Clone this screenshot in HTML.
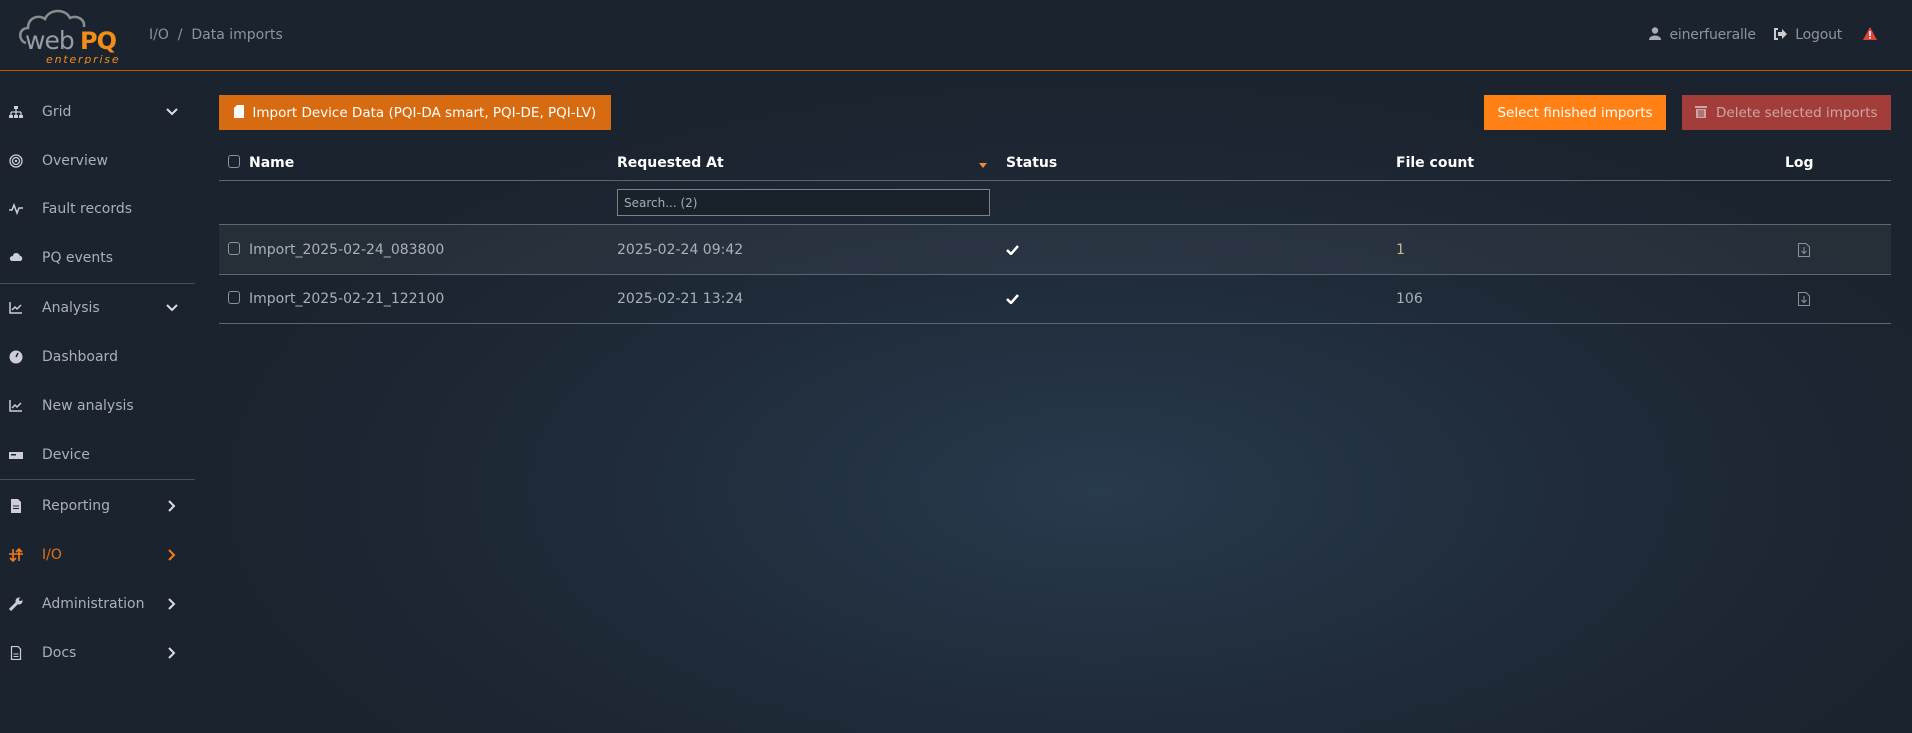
<!DOCTYPE html>
<html><head><meta charset="utf-8"><style>
*{box-sizing:border-box;margin:0;padding:0}
body{width:1912px;height:733px;overflow:hidden;font-family:"DejaVu Sans","Liberation Sans",sans-serif;font-size:13px;color:#b4bac2;
background:radial-gradient(ellipse 900px 420px at 1100px 490px,#283a4d 0%,#1f2b39 55%,#1b232e 100%);position:relative}
.hdr{position:absolute;left:0;top:0;width:1912px;height:71px;background:#1b232e;border-bottom:1px solid #b85a10}
.side{position:absolute;left:0;top:71px;width:195px;height:662px;background:#1b232e}
.it{position:absolute;left:0;width:195px;height:30px;line-height:30px;font-size:14px;color:#a9b0b8}
.it .ic{position:absolute;left:9px;top:8px;width:14px;height:14px}
.it .tx{position:absolute;left:42px}
.it .ch{position:absolute;left:166px;top:8px}
.sep{position:absolute;left:0;width:195px;height:1px;background:#4a4f55}
.btn{position:absolute;height:35px;line-height:36px;color:#fff;font-size:13.5px;text-align:center}
.th{position:absolute;top:155px;font-weight:bold;color:#fff;font-size:14px}
.hl{position:absolute;left:219px;width:1672px;height:1px;background:#5d6774}
.cb{position:absolute;width:12px;height:13px;border:1px solid #8a929c;border-radius:3px}
.td{position:absolute;font-size:14px;color:#a9b0b8}
</style></head><body>
<div class="hdr">
<svg style="position:absolute;left:16px;top:6px" width="110" height="58" viewBox="0 0 110 58">
<path d="M10 37 C2 35 2 22 12 22 C12 12 22 8 29 13 C33 3 49 2 54 12 C61 9 69 13 68 21" fill="none" stroke="#8a8d90" stroke-width="2.5"/>
<text x="9" y="43" font-family="DejaVu Sans" font-size="25" fill="#9a9d9f" letter-spacing="-1">web</text>
<text x="64" y="43" font-family="DejaVu Sans" font-size="24" font-weight="bold" fill="#f28c1a" letter-spacing="-1">PQ</text>
<text x="30" y="57" font-family="DejaVu Sans" font-size="11" font-style="italic" fill="#f28c1a" letter-spacing="1.8">enterprise</text>
</svg>
<div style="position:absolute;left:149px;top:27px;font-size:14px;color:#8c939b">I/O &nbsp;/&nbsp; Data imports</div>
<div style="position:absolute;left:1649px;top:27px;font-size:14px;color:#8c939b;letter-spacing:-0.2px">
<svg width="12" height="13" viewBox="0 0 12 13" style="vertical-align:-1px"><circle cx="6" cy="3.5" r="3.2" fill="#aab"/><path d="M0 13 C0 7 12 7 12 13Z" fill="#aab"/></svg>
&nbsp;einerfueralle&nbsp;&nbsp;&nbsp;
<svg width="14" height="12" viewBox="0 0 14 12" style="vertical-align:-1px"><path d="M5 1H2V11H5" fill="none" stroke="#ccc" stroke-width="2"/><path d="M5 4H9V1L14 6L9 11V8H5Z" fill="#ccc"/></svg>
&nbsp;Logout&nbsp;&nbsp;&nbsp;&nbsp;
<svg width="14" height="13" viewBox="0 0 14 13" style="vertical-align:-1px"><path d="M7 0L14 13H0Z" fill="#e0433a"/><rect x="6.2" y="4" width="1.6" height="5" fill="#fff"/><rect x="6.2" y="10" width="1.6" height="1.6" fill="#fff"/></svg>
</div>
</div>
<div class="side">
<div class="it" style="top:26px"><svg class="ic" viewBox="0 0 14 14"><rect x="5" y="1" width="4" height="3" fill="#ccd"/><path d="M7 4V7M2 7H12M2 7V10M7 7V10M12 7V10" stroke="#ccd" stroke-width="1.3" fill="none"/><rect x="0" y="10" width="4" height="3" fill="#ccd"/><rect x="5" y="10" width="4" height="3" fill="#ccd"/><rect x="10" y="10" width="4" height="3" fill="#ccd"/></svg><span class="tx">Grid</span><svg class="ch" width="12" height="14" viewBox="0 0 12 14"><path d="M1 4L6 9L11 4" stroke="#ddd" stroke-width="2" fill="none"/></svg></div>
<div class="it" style="top:75px"><svg class="ic" viewBox="0 0 14 14"><circle cx="7" cy="7" r="6" fill="none" stroke="#ccd" stroke-width="1.3"/><circle cx="7" cy="7" r="3.5" fill="none" stroke="#ccd" stroke-width="1.3"/><circle cx="7" cy="7" r="1.2" fill="#ccd"/></svg><span class="tx">Overview</span></div>
<div class="it" style="top:123px"><svg class="ic" viewBox="0 0 14 14"><path d="M0 8H3L5 3L8 11L10 6H14" stroke="#ccd" stroke-width="1.5" fill="none"/></svg><span class="tx">Fault records</span></div>
<div class="it" style="top:172px"><svg class="ic" viewBox="0 0 14 14"><path d="M3 10C0 10 0 5 4 5C4 1 10 1 11 5C14 5 14 10 11 10Z" fill="#ccd"/></svg><span class="tx">PQ events</span></div>
<div class="sep" style="top:212px"></div>
<div class="it" style="top:222px"><svg class="ic" viewBox="0 0 14 14"><path d="M1 1V12H13" stroke="#ccd" stroke-width="1.5" fill="none"/><path d="M3 9L6 6L8 8L12 4" stroke="#ccd" stroke-width="1.5" fill="none"/></svg><span class="tx">Analysis</span><svg class="ch" width="12" height="14" viewBox="0 0 12 14"><path d="M1 4L6 9L11 4" stroke="#ddd" stroke-width="2" fill="none"/></svg></div>
<div class="it" style="top:271px"><svg class="ic" viewBox="0 0 14 14"><circle cx="7" cy="7" r="6.5" fill="#ccd"/><path d="M7 7L9 3" stroke="#1b232e" stroke-width="1.5"/></svg><span class="tx">Dashboard</span></div>
<div class="it" style="top:320px"><svg class="ic" viewBox="0 0 14 14"><path d="M1 1V12H13" stroke="#ccd" stroke-width="1.5" fill="none"/><path d="M3 9L6 6L8 8L12 4" stroke="#ccd" stroke-width="1.5" fill="none"/></svg><span class="tx">New analysis</span></div>
<div class="it" style="top:369px"><svg class="ic" viewBox="0 0 14 14"><rect x="0" y="4" width="14" height="7" fill="#ccd"/><rect x="2" y="6" width="5" height="1.5" fill="#1b232e"/></svg><span class="tx">Device</span></div>
<div class="sep" style="top:408px"></div>
<div class="it" style="top:420px"><svg class="ic" viewBox="0 0 14 14"><path d="M2 0H9L12 3V14H2Z" fill="#ccd"/><path d="M4 7H10M4 9.5H10" stroke="#1b232e"/></svg><span class="tx">Reporting</span><svg class="ch" width="12" height="14" viewBox="0 0 12 14"><path d="M3 2L8 7L3 12" stroke="#ddd" stroke-width="2" fill="none"/></svg></div>
<div class="it" style="top:469px;color:#e0731a"><svg class="ic" viewBox="0 0 14 14"><path d="M4 1V13M1 10L4 13L7 10M10 13V1M7 4L10 1L13 4M0 6H14" stroke="#f07d1a" stroke-width="1.6" fill="none"/></svg><span class="tx">I/O</span><svg class="ch" width="12" height="14" viewBox="0 0 12 14"><path d="M3 2L8 7L3 12" stroke="#f07d1a" stroke-width="2" fill="none"/></svg></div>
<div class="it" style="top:518px"><svg class="ic" viewBox="0 0 14 14"><path d="M1 13L8 6" stroke="#ccd" stroke-width="3"/><circle cx="10" cy="4" r="3.5" fill="#ccd"/><circle cx="11.5" cy="2.5" r="1.5" fill="#1b232e"/></svg><span class="tx">Administration</span><svg class="ch" width="12" height="14" viewBox="0 0 12 14"><path d="M3 2L8 7L3 12" stroke="#ddd" stroke-width="2" fill="none"/></svg></div>
<div class="it" style="top:567px"><svg class="ic" viewBox="0 0 14 14"><path d="M2.5 .5H9L11.5 3V13.5H2.5Z" fill="none" stroke="#ccd" stroke-width="1.2"/><path d="M4.5 8H9.5M4.5 10.5H9.5" stroke="#ccd"/></svg><span class="tx">Docs</span><svg class="ch" width="12" height="14" viewBox="0 0 12 14"><path d="M3 2L8 7L3 12" stroke="#ddd" stroke-width="2" fill="none"/></svg></div>
</div>

<div class="btn" style="left:219px;top:95px;width:392px;background:#d66b12"><svg width="10" height="13" viewBox="0 0 10 13" style="vertical-align:-1px"><path d="M3 0H10V13H0V3Z" fill="#fff"/></svg>&nbsp; Import Device Data (PQI-DA smart, PQI-DE, PQI-LV)</div>
<div class="btn" style="left:1484px;top:95px;width:182px;background:#ff8015">Select finished imports</div>
<div class="btn" style="left:1682px;top:95px;width:209px;background:#a33d3a;color:#c9a8a6"><svg width="12" height="13" viewBox="0 0 12 13" style="vertical-align:-1px"><rect x="0" y="1" width="12" height="2" fill="#c9a8a6"/><path d="M1 4H11V13H1Z" fill="#c9a8a6"/><path d="M4 5V12M6 5V12M8 5V12" stroke="#a33d3a"/></svg>&nbsp; Delete selected imports</div>

<div class="cb" style="left:228px;top:155px"></div>
<div class="th" style="left:249px">Name</div>
<div class="th" style="left:617px">Requested At</div>
<svg style="position:absolute;left:979px;top:163px" width="8" height="6"><path d="M0 0H8L4 5Z" fill="#f08a3a"/></svg>
<div class="th" style="left:1006px">Status</div>
<div class="th" style="left:1396px">File count</div>
<div class="th" style="left:1785px">Log</div>
<div class="hl" style="top:180px"></div>
<div style="position:absolute;left:617px;top:189px;width:373px;height:27px;border:1px solid #7a828c;background:#19212b;font-size:12px;color:#a4abb3;line-height:26px;padding-left:6px">Search... (2)</div>
<div class="hl" style="top:224px"></div>
<div style="position:absolute;left:219px;top:225px;width:1672px;height:49px;background:rgba(255,255,255,0.05)"></div>
<div class="hl" style="top:274px"></div>
<div class="hl" style="top:323px"></div>

<div class="cb" style="left:228px;top:242px"></div>
<div class="td" style="left:249px;top:242px">Import_2025-02-24_083800</div>
<div class="td" style="left:617px;top:242px">2025-02-24 09:42</div>
<svg style="position:absolute;left:1006px;top:245px" width="13" height="10"><path d="M1 5L5 9L12 1" stroke="#fff" stroke-width="2.5" fill="none"/></svg>
<div class="td" style="left:1396px;top:242px;color:#c9b98c">1</div>
<svg style="position:absolute;left:1798px;top:243px" width="12" height="14" viewBox="0 0 12 14"><path d="M.5 .5H8L11.5 4V13.5H.5Z" fill="none" stroke="#8a929c"/><path d="M6 4V10M3.5 8L6 10.5L8.5 8" stroke="#8a929c" fill="none"/></svg>

<div class="cb" style="left:228px;top:291px"></div>
<div class="td" style="left:249px;top:291px">Import_2025-02-21_122100</div>
<div class="td" style="left:617px;top:291px">2025-02-21 13:24</div>
<svg style="position:absolute;left:1006px;top:294px" width="13" height="10"><path d="M1 5L5 9L12 1" stroke="#fff" stroke-width="2.5" fill="none"/></svg>
<div class="td" style="left:1396px;top:291px">106</div>
<svg style="position:absolute;left:1798px;top:292px" width="12" height="14" viewBox="0 0 12 14"><path d="M.5 .5H8L11.5 4V13.5H.5Z" fill="none" stroke="#8a929c"/><path d="M6 4V10M3.5 8L6 10.5L8.5 8" stroke="#8a929c" fill="none"/></svg>
</body></html>
